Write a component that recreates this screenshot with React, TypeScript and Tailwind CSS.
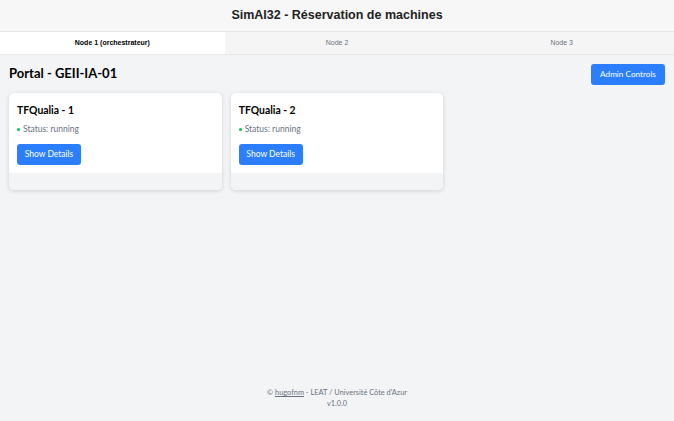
import React from "react";

const machines = [
  { name: "TFQualia - 1", status: "running" },
  { name: "TFQualia - 2", status: "running" },
];

const tabs = ["Node 1 (orchestrateur)", "Node 2", "Node 3"];

function MachineCard({ name, status }: { name: string; status: string }) {
  return (
    <div className="bg-white rounded-[5px] shadow-[0_1px_4px_rgba(0,0,0,0.15)] overflow-hidden">
      <div className="px-2 pt-[10px] pb-2">
        <h3 className="text-[10.4px] font-bold text-black leading-[14px]">{name}</h3>
        <div className="flex items-center gap-[3px] mt-[6px] text-[8.5px] text-gray-500 leading-[12px]">
          <span className="w-[3px] h-[3px] rounded-full bg-green-500" />
          Status: {status}
        </div>
        <button className="mt-[9px] block bg-blue-500 text-white text-[8.5px] rounded-[3px] h-[21px] w-[64px]">
          Show Details
        </button>
      </div>
      <div className="h-[17px] bg-gray-100" />
    </div>
  );
}

export default function App() {
  return (
    <div
      className="min-h-[421px] flex flex-col bg-gray-100"
      style={{ fontFamily: 'Lato, sans-serif' }}
    >
      <header className="h-[31px] bg-[#f7f7f7] flex items-center justify-center">
        <h1 className="text-[12.5px] font-bold text-[#222]" style={{ fontFamily: '"Liberation Sans", Arial, sans-serif' }}>
          SimAI32 - Réservation de machines
        </h1>
      </header>
      <nav
        className="grid grid-cols-3 h-[24px] border-t border-b border-gray-200 bg-[#f5f5f5]"
        style={{ fontFamily: '"Liberation Sans", Arial, sans-serif' }}
      >
        {tabs.map((t, i) => (
          <div
            key={t}
            className={
              i === 0
                ? "flex items-center justify-center bg-white text-[7px] font-bold text-black"
                : "flex items-center justify-center text-[7px] text-gray-500"
            }
          >
            {t}
          </div>
        ))}
      </nav>
      <main className="flex-1 px-[9px] pt-[9px]">
        <div className="flex items-center justify-between h-[21px]">
          <h2 className="text-[13px] font-bold text-black leading-4 -mt-[3px]">Portal - GEII-IA-01</h2>
          <button className="bg-blue-500 text-white text-[8.2px] rounded-[3px] h-[21px] w-[74px]">
            Admin Controls
          </button>
        </div>
        <div className="grid grid-cols-3 gap-[9px] mt-[8px]">
          {machines.map((m) => (
            <MachineCard key={m.name} {...m} />
          ))}
        </div>
      </main>
      <footer className="text-center text-[7.4px] text-gray-500 leading-[11px] pb-[12px]">
        <div>
          © <a className="underline">hugofnm</a> - LEAT / Université Côte d'Azur
        </div>
        <div>v1.0.0</div>
      </footer>
    </div>
  );
}
